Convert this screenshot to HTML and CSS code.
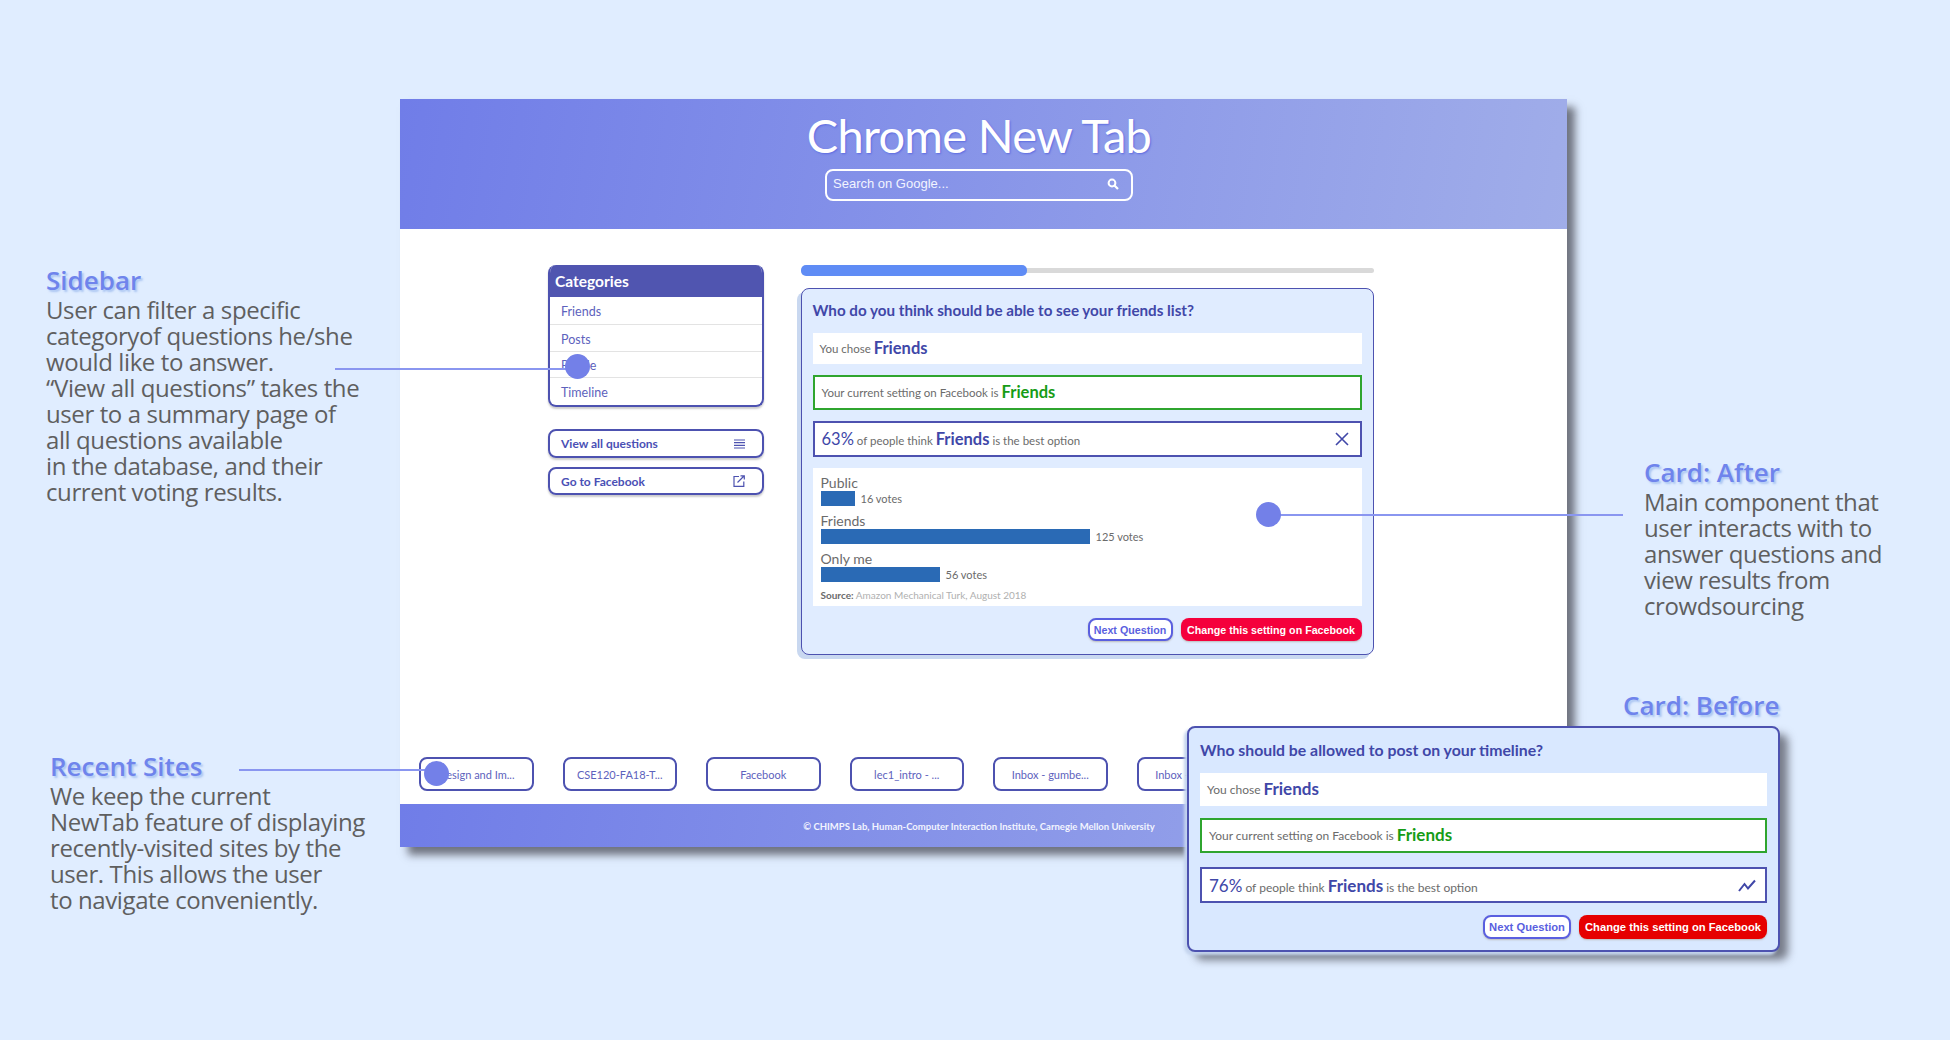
FILE: index.html
```html
<!DOCTYPE html>
<html lang="en">
<head>
    <meta charset="UTF-8">
    <title>Chrome New Tab</title>
    <link rel="stylesheet" href="styles.css">
</head>
<body>
<div class="canvas">

    <div class="window">
        <header class="top">
            <h1>Chrome New Tab</h1>
            <div class="search">
                <span>Search on Google...</span>
                <svg width="12" height="12" viewBox="0 0 12 12"><circle cx="5" cy="5" r="3.4" fill="none" stroke="#fff" stroke-width="2"/><path d="M7.5 7.5L11 11" stroke="#fff" stroke-width="2.2"/></svg>
            </div>
        </header>

        <main class="main">
            <aside class="sidebar">
                <div class="cats">
                    <div class="cats_head">Categories</div>
                    <div class="cat cat_1">Friends</div>
                    <div class="cat cat_2">Posts</div>
                    <div class="cat cat_3">Profile</div>
                    <div class="cat cat_4">Timeline</div>
                </div>
                <div class="side_btn side_btn_first">
                    <span>View all questions</span>
                    <svg width="11" height="10" viewBox="0 0 11 10"><path d="M0 1h11M0 3.7h11M0 6.3h11M0 9h11" stroke="#4d52b0" stroke-width="1.2"/></svg>
                </div>
                <div class="side_btn side_btn_last">
                    <span>Go to Facebook</span>
                    <svg width="12" height="12" viewBox="0 0 12 12"><path d="M6 1.5H1v9.8h9.8V6.5" fill="none" stroke="#4d52b0" stroke-width="1.2"/><path d="M4.5 7.5L11 1M7.5 .8h3.8v3.6" fill="none" stroke="#4d52b0" stroke-width="1.2"/></svg>
                </div>
            </aside>

            <section class="column">
                <div class="progress"><div class="progress_fill"></div></div>
                <div class="card card_after">
                    <div class="question">Who do you think should be able to see your friends list?</div>
                    <div class="row row_plain">You chose <b class="pick">Friends</b></div>
                    <div class="row row_green">Your current setting on Facebook is <b class="pick pick_green">Friends</b></div>
                    <div class="row row_blue">
                        <span><b class="pick pct">63%</b> of people think <b class="pick">Friends</b> is the best option</span>
                        <svg width="14" height="14" viewBox="0 0 14 14"><path d="M1 1l12 12M13 1L1 13" stroke="#4047a8" stroke-width="1.6"/></svg>
                    </div>
                    <div class="results">
                        <div class="bar_label">Public</div>
                        <div class="bar_row"><div class="bar" style="width:34px"></div><span>16 votes</span></div>
                        <div class="bar_label">Friends</div>
                        <div class="bar_row"><div class="bar" style="width:269px"></div><span>125 votes</span></div>
                        <div class="bar_label">Only me</div>
                        <div class="bar_row"><div class="bar" style="width:119px"></div><span>56 votes</span></div>
                        <div class="source"><b>Source:</b> Amazon Mechanical Turk, August 2018</div>
                    </div>
                    <div class="actions">
                        <div class="btn btn_next">Next Question</div>
                        <div class="btn btn_change">Change this setting on Facebook</div>
                    </div>
                </div>
            </section>
        </main>

        <div class="sites">
            <div class="site">Design and Im...</div>
            <div class="site">CSE120-FA18-T...</div>
            <div class="site">Facebook</div>
            <div class="site">lec1_intro - ...</div>
            <div class="site">Inbox - gumbe...</div>
            <div class="site">Inbox - gumbe...</div>
        </div>

        <footer class="foot">© CHIMPS Lab, Human-Computer Interaction Institute, Carnegie Mellon University</footer>
    </div>

    <!-- annotations on the slide -->
    <div class="note note_sidebar">
        <h2>Sidebar</h2>
        <p>User can filter a specific<br>categoryof questions he/she<br>would like to answer.<br>“View all questions” takes the<br>user to a summary page of<br>all questions available<br>in the database, and their<br>current voting results.</p>
    </div>
    <div class="note note_recent">
        <h2>Recent Sites</h2>
        <p>We keep the current<br>NewTab feature of displaying<br>recently-visited sites by the<br>user. This allows the user<br>to navigate conveniently.</p>
    </div>
    <div class="note note_after">
        <h2>Card: After</h2>
        <p>Main component that<br>user interacts with to<br>answer questions and<br>view results from<br>crowdsourcing</p>
    </div>
    <h2 class="note note_before">Card: Before</h2>

    <div class="line line_sidebar"></div>
    <div class="dot dot_sidebar"></div>
    <div class="line line_after"></div>
    <div class="dot dot_after"></div>
    <div class="line line_recent"></div>
    <div class="dot dot_recent"></div>

    <div class="card card_before">
        <div class="question">Who should be allowed to post on your timeline?</div>
        <div class="row row_plain">You chose <b class="pick">Friends</b></div>
        <div class="row row_green">Your current setting on Facebook is <b class="pick pick_green">Friends</b></div>
        <div class="row row_blue">
            <span><b class="pick pct">76%</b> of people think <b class="pick">Friends</b> is the best option</span>
            <svg width="18" height="13" viewBox="0 0 18 13"><path d="M1 12L6.5 5l3.5 4.5L17 1.5" fill="none" stroke="#4047a8" stroke-width="2"/></svg>
        </div>
        <div class="actions">
            <div class="btn btn_next">Next Question</div>
            <div class="btn btn_change">Change this setting on Facebook</div>
        </div>
    </div>

</div>
</body>
</html>
```

FILE: styles.css
```css
* {
    box-sizing: border-box;
}
body {
    margin: 0;
    background: #e0edff;
    font-family: Lato, sans-serif;
    overflow: hidden;
}
.canvas {
    position: relative;
    width: 1950px;
    height: 1040px;
    background: #e0edff;
    overflow: hidden;
}

/* the browser window */
.window {
    position: absolute;
    left: 400px;
    top: 99px;
    width: 1167px;
    height: 748px;
    display: flex;
    flex-direction: column;
    background: #fff;
    box-shadow: 8px 8px 8px rgba(50, 50, 60, 0.65);
}
.top {
    height: 130px;
    padding-right: 9px;
    display: flex;
    flex-direction: column;
    align-items: center;
    background: linear-gradient(100deg, #707de8, #a0ade9);
}
.top h1 {
    margin: 0;
    padding-top: 11px;
    height: 70px;
    font-size: 47px;
    font-weight: 400;
    line-height: 50px;
    letter-spacing: -0.7px;
    color: #fff;
    text-shadow: 1px 1px 2px #5c6ae0;
}
.search {
    width: 308px;
    height: 32px;
    display: flex;
    align-items: center;
    justify-content: space-between;
    padding: 0 12px 3px 6px;
    border: 2px solid #fff;
    border-radius: 8px;
    font-family: "Liberation Sans", sans-serif;
    font-size: 13px;
    color: #f2f4ff;
}

.main {
    flex: 1;
    display: flex;
    gap: 37px;
    padding: 36px 0 0 148px;
}
.sidebar {
    width: 216px;
}
.cats {
    height: 142px;
    border: 2px solid #4d52b0;
    border-top: 0;
    border-radius: 8px;
    overflow: hidden;
    box-shadow: 0 2px 2px #ccc;
}
.cats_head {
    height: 32px;
    margin: 0 -2px;
    padding-left: 7px;
    background: #5055b0;
    color: #fff;
    font-size: 15.5px;
    font-weight: 700;
    line-height: 32px;
}
.cat {
    padding: 2px 0 0 11px;
    border-bottom: 1px solid #e3e3e3;
    font-size: 12.5px;
    color: #5d62bd;
    display: flex;
    align-items: center;
}
.cat_1 { height: 28px; }
.cat_2 { height: 27px; }
.cat_3 { height: 26px; }
.cat_4 { height: 27px; border-bottom: 0; }

.side_btn {
    height: 29px;
    margin-top: 9px;
    display: flex;
    align-items: center;
    justify-content: space-between;
    padding: 0 17px 0 11px;
    border: 2px solid #4d52b0;
    border-radius: 8px;
    font-size: 12px;
    font-weight: 700;
    color: #4a50b5;
    box-shadow: 0 2px 2px #ccc;
}
.side_btn_first {
    margin-top: 22px;
}
.side_btn_last {
    height: 28px;
}

.column {
    width: 573px;
}
.progress {
    height: 5px;
    margin: 3px 0 15px;
    border-radius: 3px;
    background: #d9d9d9;
    position: relative;
}
.progress_fill {
    position: absolute;
    left: 0;
    top: -3px;
    width: 226px;
    height: 11px;
    border-radius: 5px;
    background: #5f8cf5;
}

/* question card, used twice */
.card {
    border: 2px solid #4d52b0;
    border-radius: 8px;
    padding: 4px 10px 13px;
    background: #e0ecff;
}
.card_after {
    height: 367px;
    border-width: 1.5px;
    padding: 5px 11.5px 13px 10.5px;
    box-shadow: -4px 4px 0 #c9d8f0;
}
.card_before {
    position: absolute;
    left: 1187px;
    top: 726px;
    width: 593px;
    height: 226px;
    padding: 6px 11px 13px;
    background: #d9e8ff;
    box-shadow: -3px 3px 3px #c4d4ee, 8px 8px 8px rgba(50, 50, 60, 0.6);
}
.question {
    height: 32px;
    margin-bottom: 7px;
    font-size: 15.2px;
    font-weight: 700;
    line-height: 32px;
    color: #4047a8;
}
.row {
    margin-bottom: 11px;
    padding: 0 7px;
    background: #fff;
    font-size: 11.5px;
    color: #6b6b6b;
    display: flex;
    align-items: center;
    gap: 3px;
}
.row_plain {
    height: 31px;
}
.row_green {
    height: 35px;
    border: 2px solid #2fa52f;
}
.row_blue {
    height: 36px;
    border: 2px solid #4d52b0;
    justify-content: space-between;
    padding-right: 11px;
}
.pick {
    font-size: 16.5px;
    font-weight: 700;
    color: #4047a8;
}
.row_plain .pick,
.row_green .pick {
    margin-bottom: 2px;
}
.pick_green {
    color: #169c16;
}
.pct {
    font-weight: 400;
}
.card_before .question {
    font-size: 15.8px;
}
.card_before .row {
    font-size: 12px;
}
.card_before .pick {
    font-size: 17px;
}
.card_before .row_plain {
    height: 33px;
    margin-bottom: 12px;
}
.card_before .row_green {
    margin-bottom: 14px;
}
.card_before .row_blue {
    margin-bottom: 12px;
    padding-right: 9px;
}

.results {
    height: 138px;
    margin-bottom: 12px;
    padding: 7px 8px 0;
    background: #fff;
    color: #6b6b6b;
}
.bar_label {
    height: 16px;
    font-size: 14px;
    line-height: 16px;
}
.bar_row {
    height: 21px;
    margin-bottom: 1px;
    display: flex;
    align-items: flex-start;
    gap: 6px;
    font-size: 11px;
    line-height: 16px;
}
.bar {
    height: 15px;
    background: #2a6ab5;
}
.source {
    font-size: 10px;
    color: #b0b0b0;
    line-height: 14px;
    margin-top: -1px;
}
.source b {
    color: #6b6b6b;
}

.actions {
    display: flex;
    justify-content: flex-end;
    gap: 8px;
}
.btn {
    height: 23px;
    display: flex;
    align-items: center;
    justify-content: center;
    border-radius: 8px;
    font-family: "Liberation Sans", sans-serif;
    font-size: 10.7px;
    font-weight: 700;
    box-shadow: 0 1px 2px #bbb;
}
.btn_next {
    width: 85px;
    border: 2px solid #5a5fe0;
    background: #fff;
    color: #5a5fe0;
}
.btn_change {
    width: 181px;
    background: #f5003c;
    color: #fff;
}
.card_before .btn {
    height: 24px;
    font-size: 11.2px;
}
.card_before .btn_next {
    width: 88px;
}
.card_before .btn_change {
    width: 188px;
    background: #e60000;
}

.sites {
    display: flex;
    gap: 29px;
    padding-left: 19px;
    margin-bottom: 13px;
}
.site {
    width: 114.5px;
    height: 34px;
    flex-shrink: 0;
    display: flex;
    align-items: center;
    justify-content: center;
    border: 2px solid #4d52b0;
    border-radius: 8px;
    font-size: 11px;
    color: #5d62bd;
}
.foot {
    height: 43px;
    padding: 1px 9px 0 0;
    display: flex;
    align-items: center;
    justify-content: center;
    background: linear-gradient(100deg, #707de8, #a0ade9);
    font-size: 9.5px;
    font-weight: 700;
    color: #f2f4ff;
}

/* annotations */
.note {
    position: absolute;
    font-family: "Open Sans", sans-serif;
}
.note h2,
.note_before {
    margin: 0 0 2px;
    height: 30px;
    font-size: 26px;
    font-weight: 600;
    line-height: 30px;
    color: #6f84ec;
    text-shadow: 2px 2px 2px rgba(120, 160, 230, 0.5);
    white-space: nowrap;
}
.note p {
    margin: 0;
    font-size: 24px;
    line-height: 26px;
    letter-spacing: -0.4px;
    color: #5f5f5f;
    white-space: nowrap;
}
.note_sidebar { left: 46px; top: 265px; }
.note_recent { left: 50px; top: 751px; }
.note_after { left: 1644px; top: 457px; }
.note_before { left: 1623px; top: 690px; }

.line {
    position: absolute;
    height: 2px;
    background: #8a96f0;
}
.line_sidebar { left: 335px; top: 368px; width: 235px; }
.line_after { left: 1268px; top: 514px; width: 355px; }
.line_recent { left: 239px; top: 769px; width: 190px; }
.dot {
    position: absolute;
    width: 25px;
    height: 25px;
    border-radius: 50%;
    background: #7380e8;
}
.dot_sidebar { left: 565px; top: 354px; }
.dot_after { left: 1256px; top: 502px; }
.dot_recent { left: 424px; top: 761px; }
```
